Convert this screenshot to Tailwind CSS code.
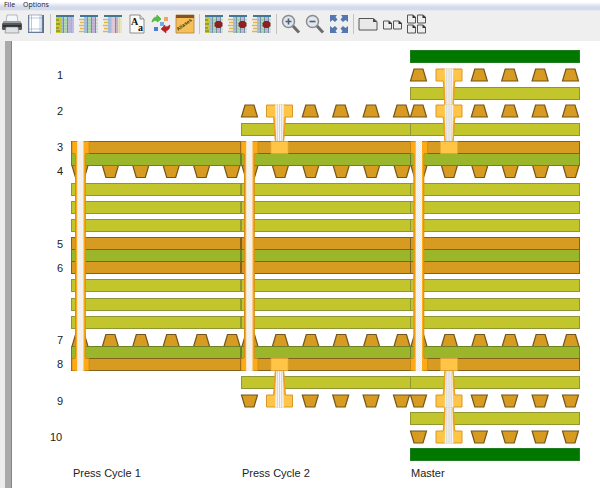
<!DOCTYPE html>
<html lang="en">
<head>
  <meta charset="UTF-8" />
  <meta name="viewport" content="width=device-width, initial-scale=1.0" />
  <title>Stackup Viewer</title>
  <script src="https://cdn.jsdelivr.net/npm/@tailwindcss/browser@4"></script>
</head>
<body class="min-h-screen flex flex-col bg-white font-['Liberation_Sans',Arial,sans-serif] text-[#222]">

  <nav class="flex items-center h-[11px] pl-1 gap-2 bg-linear-to-b from-white from-20% to-[#d3daec] to-70% border-b border-[#e6e8ee] font-['Open_Sans','Noto_Sans',sans-serif] text-[7px] leading-[10px]">
    <button type="button">File</button>
    <button type="button">Options</button>
  </nav>

  <div class="flex items-center h-[30px] px-[2px] pb-[5px] gap-1 bg-[#efefef]" role="toolbar">
    <button type="button" aria-label="Print" class="size-5">
      <svg viewBox="0 0 20 20" class="size-5">
        <path d="M5 1h10l1 7H4z" fill="#f4f6f8" stroke="#8b9298" stroke-width=".6"/>
        <path d="M2 7h16l2 3v5q0 1-1 1H1q-1 0-1-1v-5z" fill="#55595d"/>
        <path d="M2 7h16l1 2H1z" fill="#9a9ea2"/>
        <path d="M1 11h18v2H1z" fill="#2c2f32"/>
        <path d="M4 13h12l1 6H3z" fill="#dfe3e6" stroke="#777" stroke-width=".6"/>
      </svg>
    </button>
    <button type="button" aria-label="Page setup" class="size-5">
      <svg viewBox="0 0 20 20" class="size-5">
        <path d="M2 1h16v18H2z" fill="#5d6f8c"/>
        <path d="M3 1h13v17H3z" fill="#fff" stroke="#8797b0" stroke-width=".7"/>
        <path d="M5.500 1v17M14 1v17M3 4h13M3 15h13" stroke="#8fb0dc" stroke-width=".7"/>
      </svg>
    </button>
    <span class="w-px h-5 bg-[#c4c4c4]"></span>
    <button type="button" aria-label="Full table" class="size-5">
      <svg viewBox="0 0 20 20" class="size-5">
        <use href="#grid"/>
        <path d="M1 3h5v16H1z" fill="#c8c832"/>
        <path d="M1 6h3M1 10h4M1 14h3M1 17h4" stroke="#6f7426"/>
        <path d="M14 3h5v16h-5z" fill="#b5b4e4" opacity=".8"/>
      </svg>
    </button>
    <button type="button" aria-label="Left columns" class="size-5">
      <svg viewBox="0 0 20 20" class="size-5"><use href="#grid"/><use href="#ticks"/></svg>
    </button>
    <button type="button" aria-label="Right columns" class="size-5">
      <svg viewBox="0 0 20 20" class="size-5">
        <use href="#grid"/><use href="#ticks"/>
        <path d="M8 3h4v16H8z" fill="#ecc4dc" opacity=".8"/>
        <path d="M15 3h4v16h-4z" fill="#efe9b0" opacity=".8"/>
      </svg>
    </button>
    <button type="button" aria-label="Fonts" class="size-5">
      <svg viewBox="0 0 20 20" class="size-5">
        <path d="M3 1h10l4 4v14H3z" fill="#fafafa" stroke="#777" stroke-width=".8"/>
        <path d="M13 1v4h4" fill="#ddd" stroke="#777" stroke-width=".8"/>
        <text font-family="Liberation Serif" font-weight="bold" fill="#111"><tspan x="4" y="11" font-size="10">A</tspan><tspan x="11" y="17" font-size="10">a</tspan></text>
      </svg>
    </button>
    <button type="button" aria-label="Refresh colours" class="size-5">
      <svg viewBox="0 0 20 20" class="size-5">
        <path d="M1 8q1-5 5-5V1l4 4-4 3V6Q3 6 1 8z" fill="#57b947" stroke="#57b947"/>
        <path d="M19 11q0 5-4 6v2l-5-4 4-4v2q3 0 5-2z" fill="#b82226" stroke="#b82226" stroke-width=".6"/>
        <path d="M13 3h4v4h-4z" fill="#f0a45c"/>
        <path d="M9 8h4v4H9z" fill="#6cb0e0"/>
        <path d="M3 13h4v4H3z" fill="#4d7fd0"/>
      </svg>
    </button>
    <button type="button" aria-label="Aliases" class="size-5">
      <svg viewBox="0 0 20 20" class="size-5">
        <path d="M1 1h18v18H1z" fill="#f7bf58" stroke="#ae8440" stroke-width=".8"/>
        <path d="M1 1h18v3H1z" fill="#84531f"/>
        <text x="3" y="17" transform="rotate(-36 3 17)" font-family="Liberation Sans" font-size="5" font-weight="bold" fill="#453008">Aliases</text>
      </svg>
    </button>
    <span class="w-px h-5 bg-[#c4c4c4]"></span>
    <button type="button" aria-label="Hide full table" class="size-5">
      <svg viewBox="0 0 20 20" class="size-5">
        <use href="#grid"/>
        <path d="M1 3h5v16H1z" fill="#c8c832"/>
        <path d="M1 6h3M1 10h4M1 14h3M1 17h4" stroke="#6f7426"/>
        <use href="#stop"/>
      </svg>
    </button>
    <button type="button" aria-label="Hide left columns" class="size-5">
      <svg viewBox="0 0 20 20" class="size-5"><use href="#grid"/><use href="#ticks"/><use href="#stop"/></svg>
    </button>
    <button type="button" aria-label="Hide right columns" class="size-5">
      <svg viewBox="0 0 20 20" class="size-5"><use href="#grid"/><use href="#ticks"/><use href="#stop"/></svg>
    </button>
    <span class="w-px h-5 bg-[#c4c4c4]"></span>
    <button type="button" aria-label="Zoom in" class="size-5">
      <svg viewBox="0 0 20 20" class="size-5"><use href="#lens"/><path d="M4.500 7.500h6M7.500 4.500v6" stroke="#4f5f74" stroke-width="1.600"/></svg>
    </button>
    <button type="button" aria-label="Zoom out" class="size-5">
      <svg viewBox="0 0 20 20" class="size-5"><use href="#lens"/><path d="M4.500 7.500h6" stroke="#4f5f74" stroke-width="1.600"/></svg>
    </button>
    <button type="button" aria-label="Fit to window" class="size-5">
      <svg viewBox="0 0 20 20" class="size-5" fill="#5577b0">
        <path id="arrow" d="M1 1h7L6.500 3 8.500 5.500 6 8 3.500 6 1 8z"/>
        <use href="#arrow" transform="matrix(-1 0 0 1 20 0)"/>
        <use href="#arrow" transform="matrix(1 0 0 -1 0 20)"/>
        <use href="#arrow" transform="rotate(180 10 10)"/>
      </svg>
    </button>
    <span class="w-px h-5 bg-[#c4c4c4]"></span>
    <button type="button" aria-label="One page" class="size-5">
      <svg viewBox="0 0 20 20" class="size-5">
        <path d="M1 4.500h14.500l3.500 3V16H1z" fill="#e9e9e9" stroke="#555"/>
        <path d="M15 4.500V8h4z" fill="#444"/>
      </svg>
    </button>
    <button type="button" aria-label="Two pages" class="size-5">
      <svg viewBox="0 0 20 20" class="size-5"><use href="#sheet" x="1" y="6"/><use href="#sheet" x="11" y="6"/></svg>
    </button>
    <button type="button" aria-label="Four pages" class="size-5">
      <svg viewBox="0 0 20 20" class="size-5"><use href="#sheet" x="1"/><use href="#sheet" x="11"/><use href="#sheet" x="1" y="10"/><use href="#sheet" x="11" y="10"/></svg>
    </button>
  </div>

  <main class="flex grow">
    <div class="w-[5px] shrink-0 bg-[#ececec]"></div>
    <div class="w-[7px] shrink-0 bg-[#a9a9a9] border-r border-[#858585]"></div>

    <div class="grow">
      <svg viewBox="0 0 588 447" class="block w-full" role="img" aria-label="Board stackup">
        <defs>
          <!-- toolbar parts -->
          <g id="grid">
            <path d="M1 1h18v18H1z" fill="#dfe8e6"/>
            <path d="M5 3h3v16H5z" fill="#a8c0e4"/>
            <path d="M9 3h3v16H9z" fill="#b3dcb4"/>
            <path d="M13 3h3v16h-3z" fill="#c9b4dc"/>
            <path d="M1 6h18M1 9h18M1 12h18M1 15h18M1 18h18" stroke="#93a5a5" stroke-width=".5"/>
            <path d="M8.500 2v17M12.500 2v17M16.500 2v17" stroke="#5c7d91" stroke-width=".8"/>
            <path d="M1 1h18v2H1z" fill="#3f7896"/>
          </g>
          <g id="ticks">
            <path d="M0 3h5v16H0z" fill="#efefef"/>
            <path d="M0 5.500h5M1 8.500h4M0 11.500h5M1 14.500h4M0 17.500h5" stroke="#ddb650" stroke-width="1.300"/>
          </g>
          <path id="stop" d="M12.500 7h4l2 2v3l-2 2h-4l-2-2V9z" fill="#8e2020"/>
          <g id="lens">
            <path d="M11.500 11.500l6.500 7" stroke="#6c6c6c" stroke-width="3"/>
            <circle cx="7.500" cy="7.500" r="6" fill="#dfe7f0" stroke="#8c8c8c" stroke-width="1.500"/>
          </g>
          <g id="sheet">
            <path d="M.5 1h5.500l2.500 2v6h-8z" fill="#eee" stroke="#555"/>
            <path d="M5.500 1v3h3V3z" fill="#333"/>
          </g>

          <!-- one row of etched copper -->
          <path id="etched" d="M4 0h9l3.500 12h-16zM34.400 0h9l3.500 12h-16zM64.800 0h9l3.500 12h-16zM95.200 0h9l3.500 12h-16zM125.600 0h9l3.500 12h-16zM156 0h9l3.500 12h-16z" fill="#d69b20" stroke="#75551a" stroke-width="1.200"/>
          <path id="etched-via" d="M4 0h9l3.500 12h-16zM64.800 0h9l3.500 12h-16zM95.200 0h9l3.500 12h-16zM125.600 0h9l3.500 12h-16zM156 0h9l3.500 12h-16z" fill="#d69b20" stroke="#75551a" stroke-width="1.200"/>
          <rect id="prepreg" width="169" height="12" fill="#c3c52c" stroke="#8f9733"/>
          <rect id="core" width="169" height="12" fill="#9cb62c" stroke="#6f7f22"/>
          <rect id="foil" width="169" height="12" fill="#d69b20" stroke="#85601a"/>
          <rect id="mask" width="169" height="12" fill="#007800" stroke="#1f7d1f"/>

          <pattern id="plating" width="2" height="2" patternUnits="userSpaceOnUse">
            <path d="M0 0h2v2H0z" fill="#fbf9f4"/>
            <path d="M0 0h1v1H0zM1 1h1v1H1z" fill="#ece9e4"/>
          </pattern>

          <!-- layers 3 to 8 -->
          <g id="press">
            <use href="#etched" transform="matrix(1 0 0 -1 0 136.500)"/>
            <use href="#etched" y="293.500"/>
            <use href="#core" y="112.500"/>
            <use href="#foil" y="100.500"/>
            <use href="#prepreg" y="142.500"/>
            <use href="#prepreg" y="160.500"/>
            <use href="#prepreg" y="178.500"/>
            <use href="#core" y="208.500"/>
            <use href="#foil" y="196.500"/>
            <use href="#foil" y="220.500"/>
            <use href="#prepreg" y="238.500"/>
            <use href="#prepreg" y="257.500"/>
            <use href="#prepreg" y="275.500"/>
            <use href="#core" y="305.500"/>
            <use href="#foil" y="317.500"/>
          </g>
          <!-- through hole, layers 3 to 8 -->
          <g id="through">
            <path d="M.5 100.500h17v12h-17zM.5 317.500h17v12h-17z" fill="#ffa914" stroke="#c98512" stroke-width=".7"/>
            <path d="M3.500 101h10.500v228.500H3.500z" fill="#ffaa18"/>
            <path d="M4 113v204M13.800 113v204" stroke="#d98c10"/>
            <path d="M5.700 100h6.300v230H5.700z" fill="url(#plating)"/>
          </g>
          <!-- laser via with its upper pad, centred on x = 0 -->
          <g id="laser">
            <path d="M-13 0h26v12H5.800L4 36h-8L-5.800 12H-13z" fill="#ffc547" stroke="#d9962a"/>
            <path d="M-5.500 12L-4 36M5.500 12L4 36" stroke="#f0a01c" stroke-width="1.300"/>
            <path d="M-4.300-.5h8.600L3.300 36h-6.600z" fill="#f7f5f2"/>
            <path d="M-2.200 0v36M0 0v36M2.200 0v36" stroke="#c9c9cc" stroke-width=".8"/>
          </g>
          <path id="land" d="M-8.500 0h17v12h-17z" fill="#ffc547" stroke="#eaa93a" stroke-width=".7"/>
        </defs>

        <use href="#press" x="59.500"/>
        <use href="#press" x="229.500"/>
        <use href="#press" x="398.500"/>

        <!-- layers 2 and 9 -->
        <use href="#etched-via" x="229" y="64"/>
        <use href="#etched-via" x="398" y="64"/>
        <use href="#prepreg" x="229.500" y="82.500"/>
        <use href="#prepreg" x="398.500" y="82.500"/>
        <use href="#prepreg" x="229.500" y="335.500"/>
        <use href="#prepreg" x="398.500" y="335.500"/>
        <use href="#etched-via" transform="matrix(1 0 0 -1 229 366)"/>
        <use href="#etched-via" transform="matrix(1 0 0 -1 398 366)"/>

        <!-- layers 1 and 10 with solder mask -->
        <use href="#mask" x="398.500" y="9.500"/>
        <use href="#etched-via" x="398" y="28"/>
        <use href="#prepreg" x="398.500" y="46.500"/>
        <use href="#prepreg" x="398.500" y="371.500"/>
        <use href="#etched-via" transform="matrix(1 0 0 -1 398 402)"/>
        <use href="#mask" x="398.500" y="407.500"/>

        <use href="#through" x="59.500"/>
        <use href="#through" x="228.500"/>
        <use href="#through" x="398"/>

        <use href="#land" x="267.500" y="100.500"/>
        <use href="#land" x="267.500" y="317.500"/>
        <use href="#land" x="437" y="100.500"/>
        <use href="#land" x="437" y="317.500"/>
        <use href="#laser" x="267.500" y="64"/>
        <use href="#laser" transform="matrix(1 0 0 -1 267.500 366)"/>
        <use href="#laser" x="437" y="28"/>
        <use href="#laser" x="437" y="64"/>
        <use href="#laser" transform="matrix(1 0 0 -1 437 402)"/>
        <use href="#laser" transform="matrix(1 0 0 -1 437 366)"/>

        <g font-size="11" fill="#222">
          <text x="45" y="38">1</text>
          <text x="45" y="74">2</text>
          <text x="45" y="110">3</text>
          <text x="45" y="134">4</text>
          <text x="45" y="207">5</text>
          <text x="45" y="231">6</text>
          <text x="45" y="303">7</text>
          <text x="45" y="327">8</text>
          <text x="45" y="364">9</text>
          <text x="38" y="400">10</text>
          <text x="61" y="436">Press Cycle 1</text>
          <text x="230" y="436">Press Cycle 2</text>
          <text x="399" y="436">Master</text>
        </g>
      </svg>
    </div>
  </main>

</body>
</html>
